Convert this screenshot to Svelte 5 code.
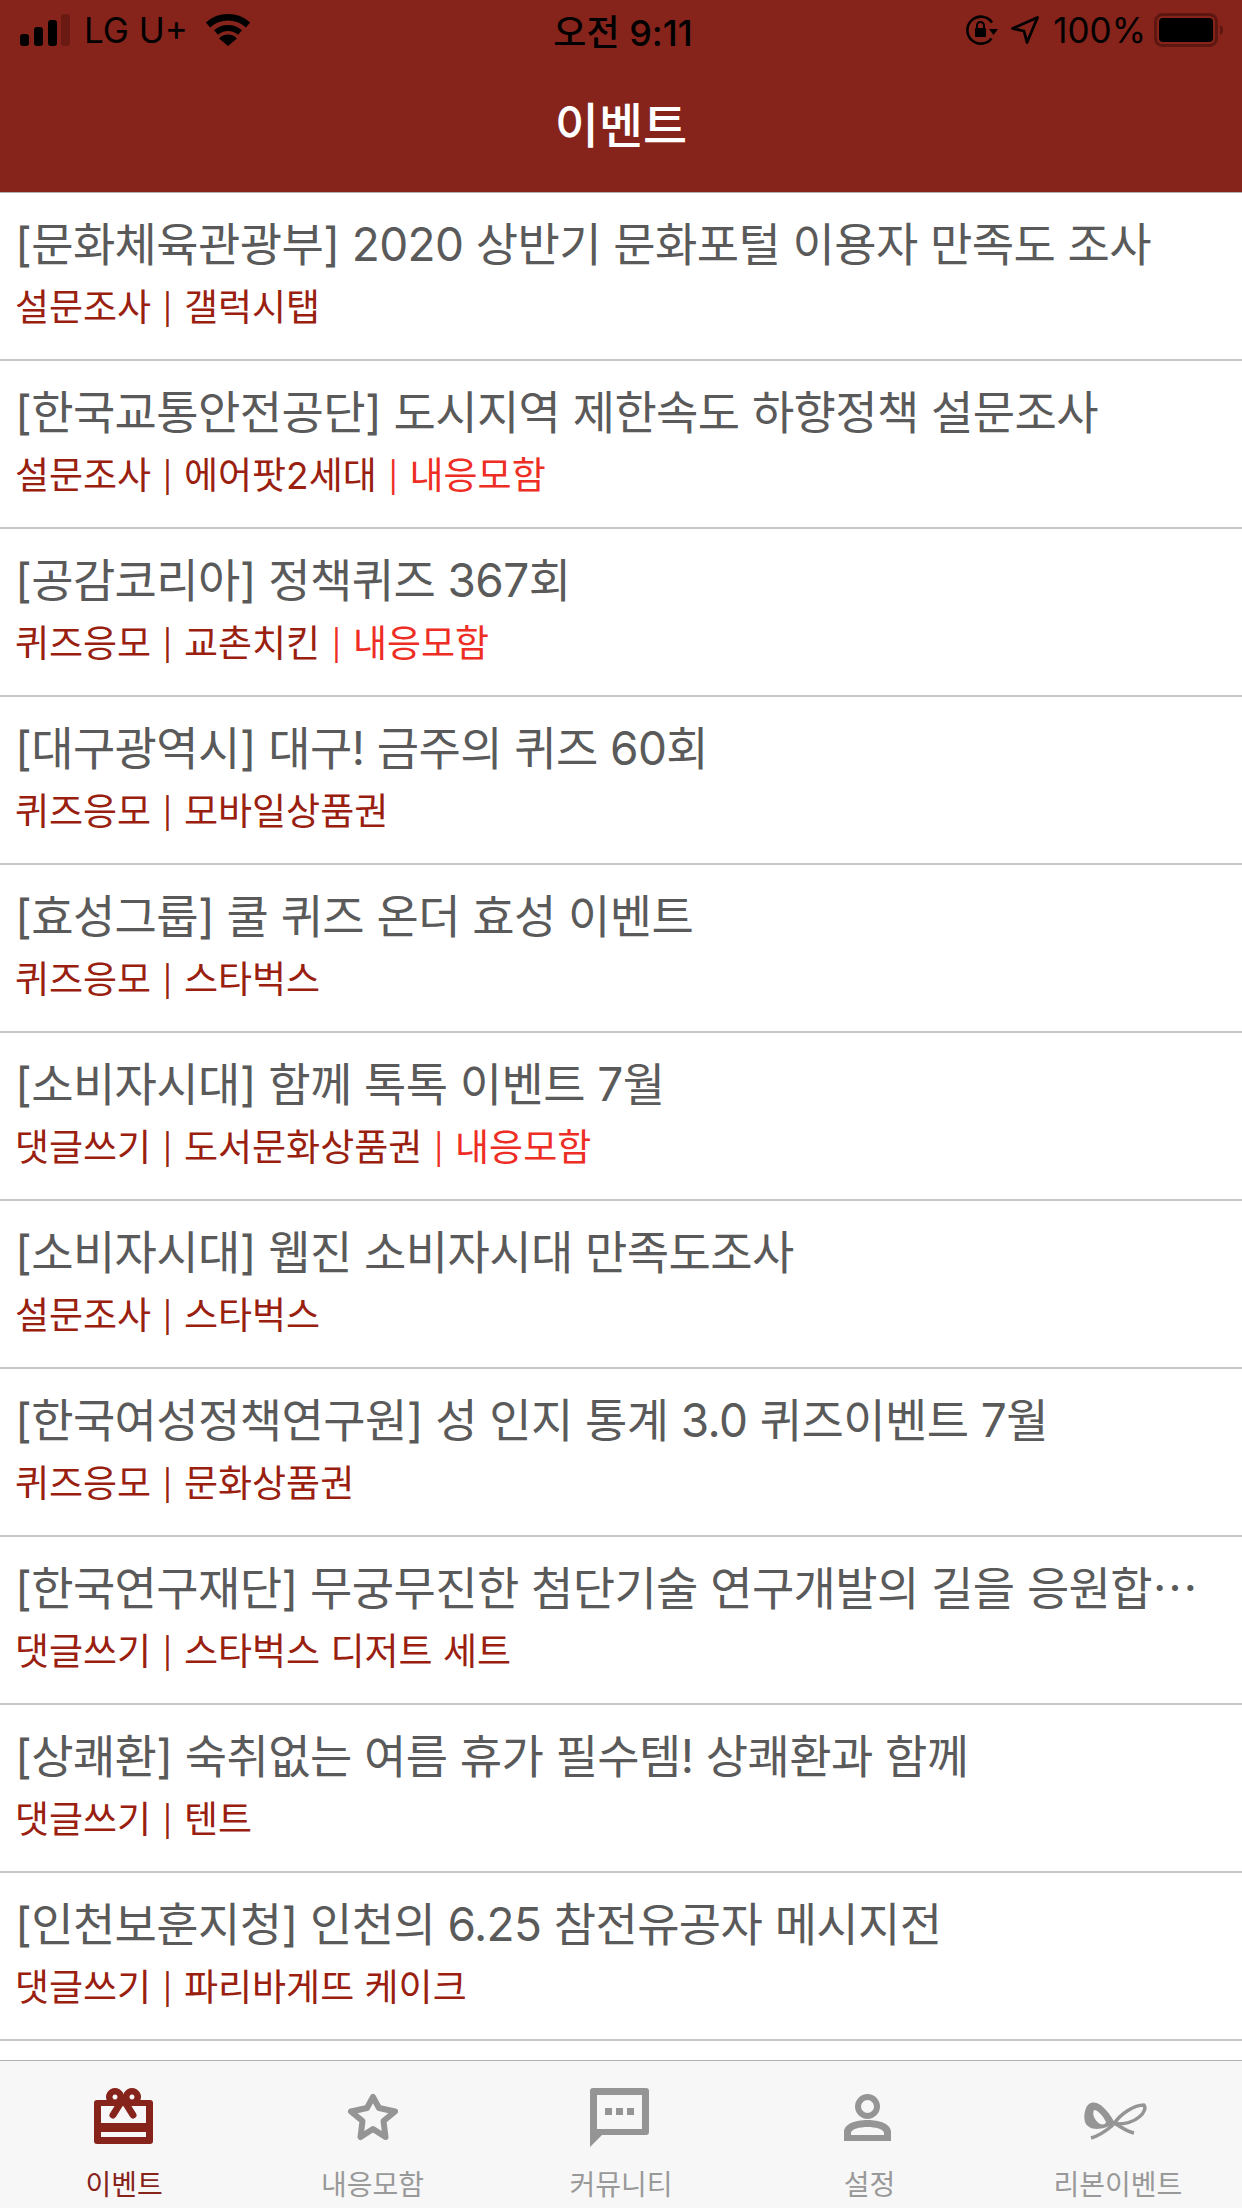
<script lang="ts">
	type Row = { title: string; kind: string; prize: string; applied?: boolean };

	const rows: Row[] = [
		{ title: '[문화체육관광부] 2020 상반기 문화포털 이용자 만족도 조사', kind: '설문조사', prize: '갤럭시탭' },
		{ title: '[한국교통안전공단] 도시지역 제한속도 하향정책 설문조사', kind: '설문조사', prize: '에어팟2세대', applied: true },
		{ title: '[공감코리아] 정책퀴즈 367회', kind: '퀴즈응모', prize: '교촌치킨', applied: true },
		{ title: '[대구광역시] 대구! 금주의 퀴즈 60회', kind: '퀴즈응모', prize: '모바일상품권' },
		{ title: '[효성그룹] 쿨 퀴즈 온더 효성 이벤트', kind: '퀴즈응모', prize: '스타벅스' },
		{ title: '[소비자시대] 함께 톡톡 이벤트 7월', kind: '댓글쓰기', prize: '도서문화상품권', applied: true },
		{ title: '[소비자시대] 웹진 소비자시대 만족도조사', kind: '설문조사', prize: '스타벅스' },
		{ title: '[한국여성정책연구원] 성 인지 통계 3.0 퀴즈이벤트 7월', kind: '퀴즈응모', prize: '문화상품권' },
		{ title: '[한국연구재단] 무궁무진한 첨단기술 연구개발의 길을 응원합⋯', kind: '댓글쓰기', prize: '스타벅스 디저트 세트' },
		{ title: '[상쾌환] 숙취없는 여름 휴가 필수템! 상쾌환과 함께', kind: '댓글쓰기', prize: '텐트' },
		{ title: '[인천보훈지청] 인천의 6.25 참전유공자 메시지전', kind: '댓글쓰기', prize: '파리바게뜨 케이크' }
	];
</script>

<div class="screen">
	<header class="top">
		<div class="status">
			<div class="status-left">
				<svg viewBox="0 0 50 32" width="50" height="32">
					<rect x="0" y="20" width="9" height="12" rx="3" fill="#000" />
					<rect x="14" y="13" width="9" height="19" rx="3" fill="#000" />
					<rect x="28" y="6" width="9" height="26" rx="3" fill="#000" />
					<rect x="41" y="0" width="9" height="32" rx="3" fill="#6a1a12" />
				</svg>
				<span class="carrier">LG U+</span>
				<svg class="wifi" viewBox="0 0 46 34" width="46" height="34">
					<path d="M3 12 A30 30 0 0 1 43 12" fill="none" stroke="#000" stroke-width="6.500" />
					<path d="M11 19.500 A18 18 0 0 1 35 19.500" fill="none" stroke="#000" stroke-width="6" />
					<path d="M23 33 L14 25.500 A12 12 0 0 1 32 25.500 Z" fill="#000" />
				</svg>
			</div>
			<span class="clock">오전 9:11</span>
			<div class="status-right">
				<svg viewBox="0 0 32 30" width="32" height="30">
					<path d="M25.500 23.500 A13.500 13.500 0 1 1 26 7.500" fill="none" stroke="#000" stroke-width="2.600" />
					<path d="M23 14 L32 14 L27.500 20 Z" fill="#000" />
					<rect x="9" y="13" width="11" height="9" rx="1" fill="#000" />
					<path d="M11 13 V10.500 A3.500 3.500 0 0 1 18 10.500 V13" fill="none" stroke="#000" stroke-width="2" />
				</svg>
				<svg class="arrow" viewBox="0 0 28 28" width="28" height="28">
					<path d="M1.500 12.500 L26.500 1.500 L16 26.500 L13 15 Z" fill="none" stroke="#000" stroke-width="2.800" stroke-linejoin="round" />
				</svg>
				<span class="battery-pct">100%</span>
				<svg viewBox="0 0 72 34" width="72" height="34">
					<rect x="1.500" y="1.500" width="61" height="31" rx="7" fill="none" stroke="#5e1710" stroke-width="3" />
					<rect x="5" y="5" width="54" height="24" rx="4" fill="#000" />
					<path d="M66 12 C70 13 70 21 66 22 Z" fill="#5e1710" />
				</svg>
			</div>
		</div>
		<h1 class="nav-title">이벤트</h1>
	</header>

	<ul class="list">
		{#each rows as row}
			<li class="row">
				<div class="title">{row.title}</div>
				<div class="meta">
					{row.kind} <span class="sep">|</span> {row.prize}
					{#if row.applied}<span class="applied"><span class="sep">|</span> 내응모함</span>{/if}
				</div>
			</li>
		{/each}
	</ul>

	<nav class="tabs">
		<div class="tab active">
			<svg viewBox="0 0 64 64" width="64" height="64">
				<path fill-rule="evenodd" fill="#86241c" d="M5 14 H58 a3 3 0 0 1 3 3 V55 a3 3 0 0 1 -3 3 H5 a3 3 0 0 1 -3 -3 V17 a3 3 0 0 1 3 -3 Z M9 20 V37 H54 V20 Z M9 46 V51 H54 V46 Z" />
				<path fill-rule="evenodd" fill="#86241c" d="M23 2 a9 9 0 1 0 0.01 0 Z M23 8.500 a2.500 2.500 0 1 1 -0.01 0 Z" />
				<path fill-rule="evenodd" fill="#86241c" d="M40 2 a9 9 0 1 0 0.01 0 Z M40 8.500 a2.500 2.500 0 1 1 -0.01 0 Z" />
				<path d="M31 13 L21 29 M31 13 L41 29" stroke="#86241c" stroke-width="7" stroke-linecap="round" />
			</svg>
			<span>이벤트</span>
		</div>
		<div class="tab">
			<svg viewBox="0 0 64 64" width="64" height="64">
				<path d="M32 11 L38 22 L54 25.500 L42.500 35 L44.500 51 L32 43 L19.500 51 L21.500 35 L10 25.500 L26 22 Z" fill="none" stroke="#959595" stroke-width="6" stroke-linejoin="round" />
			</svg>
			<span>내응모함</span>
		</div>
		<div class="tab">
			<svg viewBox="0 0 64 64" width="64" height="64">
				<path fill-rule="evenodd" fill="#959595" d="M1 61 V5 a3 3 0 0 1 3 -3 H57 a3 3 0 0 1 3 3 V46 a3 3 0 0 1 -3 3 H13 Z M8 9 V43 H53 V9 Z" />
				<rect x="16" y="22" width="7" height="7" fill="#959595" />
				<rect x="27" y="22" width="7" height="7" fill="#959595" />
				<rect x="38" y="22" width="7" height="7" fill="#959595" />
			</svg>
			<span>커뮤니티</span>
		</div>
		<div class="tab">
			<svg viewBox="0 0 64 64" width="64" height="64">
				<ellipse cx="30.500" cy="20.500" rx="9.500" ry="9.500" fill="none" stroke="#959595" stroke-width="6" />
				<path fill-rule="evenodd" fill="#959595" d="M7 55 V46 C7 38 18 34 30.500 34 C43 34 54 38 54 46 V55 Z M14 49 H47 V47 C47 43 38 41 30.500 41 C23 41 14 43 14 47 Z" />
			</svg>
			<span>설정</span>
		</div>
		<div class="tab">
			<svg viewBox="0 0 64 64" width="64" height="64">
				<path fill-rule="evenodd" fill="#959595" d="M5 17 C0 18 -3 28 -1 36 C2 44 14 46 29 37 C24 28 14 14 5 17 Z M8 24 C6 28 8 34 14 38 C17 39 20 38 20 36 C17 30 12 24 8 24 Z" />
				<path d="M28 38 C34 28 48 19 58 19 C62 24 52 39 28 38 Z" fill="none" stroke="#959595" stroke-width="3.500" stroke-linejoin="round" />
				<path d="M27 39 C20 45 12 50 5 52" fill="none" stroke="#959595" stroke-width="3.500" />
				<path d="M30 38 C36 42 42 46 48 47" fill="none" stroke="#959595" stroke-width="3.500" />
			</svg>
			<span>리본이벤트</span>
		</div>
	</nav>
</div>

<style>
	:global(body) {
		margin: 0;
		background: #fff;
	}

	.screen {
		width: 1242px;
		height: 2208px;
		display: flex;
		flex-direction: column;
		overflow: hidden;
		font-family: Inter, 'Noto Sans CJK KR', sans-serif;
	}

	.top {
		height: 192px;
		flex: none;
		background: #86241c;
		border-bottom: 1px solid #b0b0b0;
	}

	.status {
		height: 60px;
		padding: 0 16px 0 20px;
		display: grid;
		grid-template-columns: 1fr auto 1fr;
		align-items: center;
		color: #000;
		font-size: 35px;
	}

	.status-left {
		display: flex;
		align-items: center;
		gap: 14px;
	}

	.wifi {
		margin-left: 3px;
	}

	.clock {
		font-size: 36px;
		font-weight: 500;
	}

	.status-right {
		display: flex;
		align-items: center;
		justify-content: flex-end;
		gap: 8px;
	}

	.arrow {
		margin: 0 6px 0 5px;
	}

	.nav-title {
		margin: 0;
		height: 123px;
		display: flex;
		align-items: center;
		justify-content: center;
		color: #fff;
		font-size: 48px;
		font-weight: 500;
	}

	.list {
		flex: 1;
		margin: 0;
		padding: 0;
		list-style: none;
		overflow: hidden;
	}

	.row {
		box-sizing: border-box;
		height: 168px;
		padding: 21px 0 0 15px;
		border-bottom: 2px solid #c8c8c8;
	}

	.title {
		color: #5a5a5a;
		font-size: 46px;
		line-height: 60px;
		letter-spacing: -0.6px;
		white-space: nowrap;
	}

	.meta {
		margin-top: 9px;
		color: #99200f;
		font-size: 37px;
		line-height: 50px;
		white-space: nowrap;
	}

	.sep {
		padding: 0 1px;
		font-size: 30px;
		vertical-align: 1px;
	}

	.applied {
		color: #ee2d24;
	}

	.tabs {
		flex: none;
		height: 147px;
		display: grid;
		grid-template-columns: repeat(5, 1fr);
		background: #f7f7f7;
		border-top: 1px solid #b0b0b0;
	}

	.tab {
		display: flex;
		flex-direction: column;
		align-items: center;
		color: #999;
		font-size: 28px;
		line-height: 40px;
		padding-top: 25px;
	}

	.tab svg {
		flex: none;
		overflow: visible;
		margin-bottom: 15px;
	}

	.tab.active {
		color: #86241c;
	}
</style>
